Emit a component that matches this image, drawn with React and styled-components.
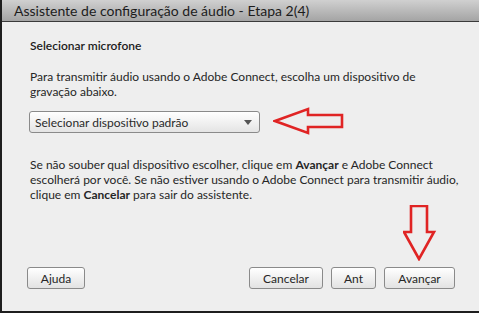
import styled, { createGlobalStyle } from "styled-components";

const GlobalStyle = createGlobalStyle`
  html, body {
    margin: 0;
    padding: 0;
    background: #eeeeee;
  }
  body {
    font-family: Lato, "Noto Sans", "DejaVu Sans", sans-serif;
  }
`;

function App() {
  return (
    <>
      <GlobalStyle />
      <Dialog>
        <TitleBar>Assistente de configuração de áudio - Etapa 2(4)</TitleBar>
        <Body>
          <Heading>Selecionar microfone</Heading>
          <Text>
            Para transmitir áudio usando o Adobe Connect, escolha um dispositivo de
            <br />
            gravação abaixo.
          </Text>
          <SelectRow>
            <Select>
              <span>Selecionar dispositivo padrão</span>
              <Caret />
            </Select>
            <LeftArrow width="72" height="30" viewBox="0 0 72 30">
              <path
                d="M2 14 L35 2 L35 8 L69 8 L69 20 L35 20 L35 26 Z"
                fill="none"
                stroke="#e02424"
                strokeWidth="2.6"
                strokeLinejoin="miter"
              />
            </LeftArrow>
          </SelectRow>
          <Text $gap={20}>
            Se não souber qual dispositivo escolher, clique em <b>Avançar</b> e Adobe Connect
            <br />
            escolherá por você. Se não estiver usando o Adobe Connect para transmitir áudio,
            <br />
            clique em <b>Cancelar</b> para sair do assistente.
          </Text>
          <Footer>
            <Button $w={58}>Ajuda</Button>
            <ButtonGroup>
              <Button $w={74}>Cancelar</Button>
              <Button $w={45}>Ant</Button>
              <Button $w={71}>Avançar</Button>
            </ButtonGroup>
          </Footer>
        </Body>
        <DownArrow width="34" height="56" viewBox="0 0 34 56">
          <path
            d="M8 1 L24 1 L24 27 L31 27 L16 54 L1 27 L8 27 Z"
            fill="none"
            stroke="#e02424"
            strokeWidth="2.6"
          />
        </DownArrow>
      </Dialog>
    </>
  );
}

const Dialog = styled.div`
  position: relative;
  display: flex;
  flex-direction: column;
  width: 479px;
  height: 313px;
  box-sizing: border-box;
  border-left: 2px solid #1e1e1e;
  border-bottom: 2px solid #1e1e1e;
  background: #eeeeee;
  color: #222222;
`;

const TitleBar = styled.div`
  height: 21px;
  padding-left: 12px;
  border-bottom: 1px solid #3a3a3a;
  background: linear-gradient(#d0d0d0, #a4a4a4);
  font-size: 14px;
  line-height: 22px;
  color: #1c1c1c;
`;

const Body = styled.div`
  flex: 1;
  display: flex;
  flex-direction: column;
  padding: 16px 24px 22px 28px;
`;

const Heading = styled.div`
  font-size: 12px;
  line-height: 15px;
  font-weight: 600;
  color: #1c1c1c;
`;

const Text = styled.p`
  margin: ${(p) => p.$gap ?? 16}px 0 0;
  font-size: 12px;
  line-height: 15px;
  white-space: nowrap;
  color: #262626;
  b {
    font-weight: 700;
  }
`;

const SelectRow = styled.div`
  display: flex;
  align-items: center;
  gap: 13px;
  margin: 8px 0 0 -1px;
`;

const Select = styled.div`
  display: flex;
  align-items: center;
  justify-content: space-between;
  width: 231px;
  height: 22px;
  box-sizing: border-box;
  padding: 0 7px 0 5px;
  border: 1px solid #8a8a8a;
  border-radius: 3px;
  background: linear-gradient(#ffffff, #e4e4e4);
  font-size: 12px;
  color: #2a2a2a;
`;

const Caret = styled.span`
  width: 0;
  height: 0;
  border-left: 4px solid transparent;
  border-right: 4px solid transparent;
  border-top: 5px solid #555555;
`;

const LeftArrow = styled.svg`
  display: block;
`;

const Footer = styled.div`
  display: flex;
  justify-content: space-between;
  align-items: center;
  margin: auto 0 0 -3px;
`;

const ButtonGroup = styled.div`
  display: flex;
  gap: 8px;
`;

const Button = styled.button`
  width: ${(p) => p.$w}px;
  height: 22px;
  padding: 0;
  border: 1px solid #8a8a8a;
  border-radius: 3px;
  background: linear-gradient(#ffffff, #e2e2e2);
  font-family: inherit;
  font-size: 12px;
  color: #262626;
`;

const DownArrow = styled.svg`
  position: absolute;
  left: 401px;
  top: 205px;
`;

export default App;
